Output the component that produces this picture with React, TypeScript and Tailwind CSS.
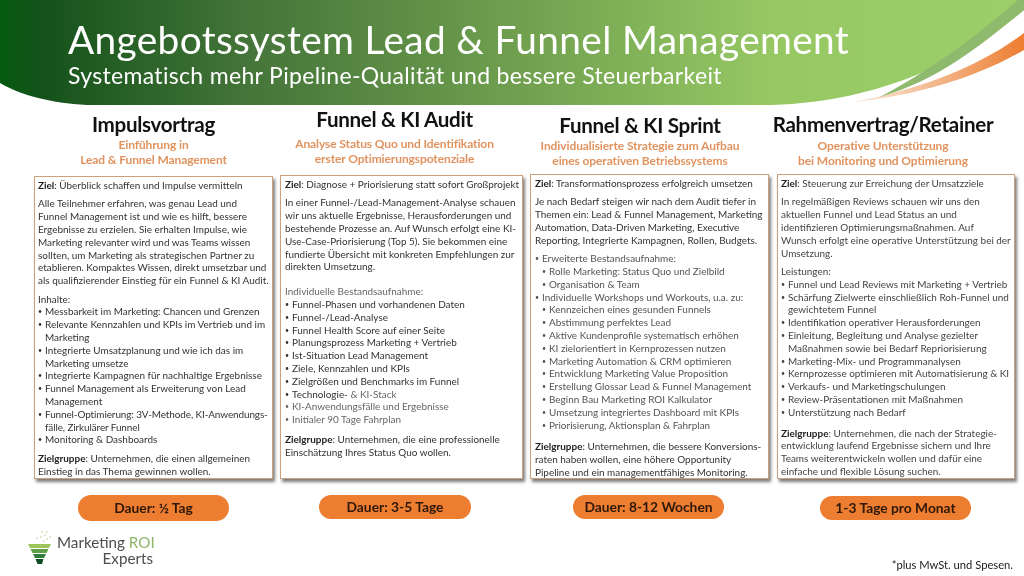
import React from "react";

const Bold = ({ children }: { children: React.ReactNode }) => <b className="font-bold text-[#222]">{children}</b>;

const Li = ({ children, sub, className }: { children: React.ReactNode; sub?: boolean; className?: string }) => (
  <div className={(sub ? "flex pl-[7px] " : "flex ") + (className ?? "")}>
    <span className="w-[7px] shrink-0 text-[7px]">•</span>
    <span>{children}</span>
  </div>
);

const Card = ({ className, children }: { className: string; children: React.ReactNode }) => (
  <div className={"whitespace-nowrap border border-[#c9a27c] bg-white pt-[2px] text-[9.95px] leading-[12.8px] shadow-[2px_3px_3px_rgba(80,80,80,0.75)] [&>p]:mb-[5.6px] " + className}>
    {children}
  </div>
);

const Head = ({ title, l1, l2, className, subClass }: { title: string; l1: string; l2: string; className: string; subClass: string }) => (
  <div className={"whitespace-nowrap text-center " + className}>
    <div className="text-[20.6px] leading-[24px] font-bold tracking-[-0.3px] text-[#111]">{title}</div>
    <div className={"text-[12px] leading-[15px] font-bold tracking-[-0.1px] text-[#e0935f] " + subClass}>{l1}</div>
    <div className="text-[12px] leading-[15px] font-bold tracking-[-0.1px] text-[#e0935f]">{l2}</div>
  </div>
);

const Pill = ({ children, className }: { children: React.ReactNode; className: string }) => (
  <div className={"flex items-center justify-center rounded-full bg-[#ed7d31] text-[13.8px] font-bold text-[#2e1808] " + className}>
    {children}
  </div>
);

export default function App() {
  return (
    <div className="relative h-[576px] w-[1024px] overflow-hidden bg-white blur-[0.3px]" style={{ fontFamily: "Lato, 'Open Sans', sans-serif" }}>
      <header className="relative h-[106px] pl-[68px] pt-[17px] text-white">
        <svg className="absolute left-0 top-0" width="1024" height="110" viewBox="0 0 1024 110">
          <defs>
            <linearGradient id="g" x1="0" x2="1" y1="0" y2="0">
              <stop offset="0" stopColor="#045a10" />
              <stop offset="0.04" stopColor="#14521a" />
              <stop offset="0.25" stopColor="#46763a" />
              <stop offset="0.5" stopColor="#6f9f4e" />
              <stop offset="0.75" stopColor="#96c763" />
              <stop offset="1" stopColor="#9ccf69" />
            </linearGradient>
            <linearGradient id="o" x1="0" x2="1" y1="0" y2="0">
              <stop offset="0" stopColor="#fdf0e6" />
              <stop offset="0.45" stopColor="#f3bd95" />
              <stop offset="1" stopColor="#ed7d31" />
            </linearGradient>
          </defs>
          <path d="M847 103 C910 92 975 70 1024 33 V50 C975 78 920 95 847 103Z" fill="url(#o)" />
          <path d="M0 0 H1024 V10 C965 60 875 105 760 105 H87 C50 103 20 95 0 83 Z" fill="url(#g)" />
          <path d="M1018 0 C985 28 945 62 880 97 C940 80 985 42 1024 10 V0Z" fill="#8fb96c" />
        </svg>
        <h1 className="relative whitespace-nowrap text-[38.8px] leading-[44px] tracking-[0.35px]">Angebotssystem Lead &amp; Funnel Management</h1>
        <div className="relative mt-[1px] whitespace-nowrap text-[23px] leading-[27px] tracking-[0.33px]">Systematisch mehr Pipeline-Qualität und bessere Steuerbarkeit</div>
      </header>

      <main className="flex pl-[34px]">
        <section className="w-[239px]">
          <Head className="mt-[6px]" subClass="mt-[1px]" title="Impulsvortrag" l1="Einführung in" l2="Lead & Funnel Management" />
          <Card className="mt-[9px] h-[303px] pl-[3px] text-[#333]">
            <p><Bold>Ziel</Bold>: Überblick schaffen und Impulse vermitteln</p>
            <p>Alle Teilnehmer erfahren, was genau Lead und<br />Funnel Management ist und wie es hilft, bessere<br />Ergebnisse zu erzielen. Sie erhalten Impulse, wie<br />Marketing relevanter wird und was Teams wissen<br />sollten, um Marketing als strategischen Partner zu<br />etablieren. Kompaktes Wissen, direkt umsetzbar und<br />als qualifizierender Einstieg für ein Funnel &amp; KI Audit.</p>
            <div>Inhalte:</div>
            <Li>Messbarkeit im Marketing: Chancen und Grenzen</Li>
            <Li>Relevante Kennzahlen und KPIs im Vertrieb und im<br />Marketing</Li>
            <Li>Integrierte Umsatzplanung und wie ich das im<br />Marketing umsetze</Li>
            <Li>Integrierte Kampagnen für nachhaltige Ergebnisse</Li>
            <Li>Funnel Management als Erweiterung von Lead<br />Management</Li>
            <Li className="tracking-[-0.1px]">Funnel-Optimierung: 3V-Methode, KI-Anwendungs-<br />fälle, Zirkulärer Funnel</Li>
            <Li>Monitoring &amp; Dashboards</Li>
            <p className="mt-[5.6px]"><Bold>Zielgruppe</Bold>: Unternehmen, die einen allgemeinen<br />Einstieg in das Thema gewinnen wollen.</p>
          </Card>
          <Pill className="ml-[44px] mt-[16px] h-[26px] w-[151px]">Dauer: ½ Tag</Pill>
        </section>

        <section className="ml-[7px] w-[243px]">
          <Head className="-ml-[14px] mt-[1px]" subClass="mt-[5px]" title="Funnel & KI Audit" l1="Analyse Status Quo und Identifikation" l2="erster Optimierungspotenziale" />
          <Card className="mt-[9px] h-[304px] pl-[4px] text-[#333]">
            <p><Bold>Ziel</Bold>: Diagnose + Priorisierung statt sofort Großprojekt</p>
            <p className="!mb-[12px]">In einer Funnel-/Lead-Management-Analyse schauen<br />wir uns aktuelle Ergebnisse, Herausforderungen und<br />bestehende Prozesse an. Auf Wunsch erfolgt eine KI-<br />Use-Case-Priorisierung (Top 5). Sie bekommen eine<br />fundierte Übersicht mit konkreten Empfehlungen zur<br />direkten Umsetzung.</p>
            <div className="text-[#666]">Individuelle Bestandsaufnahme:</div>
            <Li>Funnel-Phasen und vorhandenen Daten</Li>
            <Li>Funnel-/Lead-Analyse</Li>
            <Li>Funnel Health Score auf einer Seite</Li>
            <Li>Planungsprozess Marketing + Vertrieb</Li>
            <Li>Ist-Situation Lead Management</Li>
            <Li>Ziele, Kennzahlen und KPIs</Li>
            <Li>Zielgrößen und Benchmarks im Funnel</Li>
            <Li>Technologie- <span className="text-[#666]">&amp; KI-Stack</span></Li>
            <Li className="text-[#666]">KI-Anwendungsfälle und Ergebnisse</Li>
            <Li className="text-[#666]">Initialer 90 Tage Fahrplan</Li>
            <p className="mt-[7px]"><Bold>Zielgruppe</Bold>: Unternehmen, die eine professionelle<br />Einschätzung Ihres Status Quo wollen.</p>
          </Card>
          <Pill className="ml-[39px] mt-[16px] h-[24px] w-[152px]">Dauer: 3-5 Tage</Pill>
        </section>

        <section className="ml-[7px] w-[239px]">
          <Head className="-ml-[19px] mt-[7px]" subClass="mt-[1px]" title="Funnel & KI Sprint" l1="Individualisierte Strategie zum Aufbau" l2="eines operativen Betriebssystems" />
          <Card className="mt-[6px] h-[305px] pl-[4px] text-[#555]">
            <p className="text-[#333]"><Bold>Ziel</Bold>: Transformationsprozess erfolgreich umsetzen</p>
            <p className="text-[#333]">Je nach Bedarf steigen wir nach dem Audit tiefer in<br />Themen ein: Lead &amp; Funnel Management, Marketing<br />Automation, Data-Driven Marketing, Executive<br />Reporting, Integrierte Kampagnen, Rollen, Budgets.</p>
            <Li>Erweiterte Bestandsaufnahme:</Li>
            <Li sub>Rolle Marketing: Status Quo und Zielbild</Li>
            <Li sub>Organisation &amp; Team</Li>
            <Li>Individuelle Workshops und Workouts, u.a. zu:</Li>
            <Li sub>Kennzeichen eines gesunden Funnels</Li>
            <Li sub>Abstimmung perfektes Lead</Li>
            <Li sub>Aktive Kundenprofile systematisch erhöhen</Li>
            <Li sub>KI zielorientiert in Kernprozessen nutzen</Li>
            <Li sub>Marketing Automation &amp; CRM optimieren</Li>
            <Li sub>Entwicklung Marketing Value Proposition</Li>
            <Li sub>Erstellung Glossar Lead &amp; Funnel Management</Li>
            <Li sub>Beginn Bau Marketing ROI Kalkulator</Li>
            <Li sub>Umsetzung integriertes Dashboard mit KPIs</Li>
            <Li sub>Priorisierung, Aktionsplan &amp; Fahrplan</Li>
            <p className="mt-[9px] text-[#333]"><Bold>Zielgruppe</Bold>: Unternehmen, die bessere Konversions-<br />raten haben wollen, eine höhere Opportunity<br />Pipeline und ein managementfähiges Monitoring.</p>
          </Card>
          <Pill className="ml-[43px] mt-[16px] h-[24px] w-[151px]">Dauer: 8-12 Wochen</Pill>
        </section>

        <section className="ml-[8px] w-[238px]">
          <Head className="-ml-[26px] mt-[6px]" subClass="mt-[2px]" title="Rahmenvertrag/Retainer" l1="Operative Unterstützung" l2="bei Monitoring und Optimierung" />
          <Card className="mt-[6px] h-[305px] pl-[3px] text-[#444]">
            <p><Bold>Ziel</Bold>: Steuerung zur Erreichung der Umsatzziele</p>
            <p>In regelmäßigen Reviews schauen wir uns den<br />aktuellen Funnel und Lead Status an und<br />identifizieren Optimierungsmaßnahmen. Auf<br />Wunsch erfolgt eine operative Unterstützung bei der<br />Umsetzung.</p>
            <div>Leistungen:</div>
            <Li>Funnel und Lead Reviews mit Marketing + Vertrieb</Li>
            <Li>Schärfung Zielwerte einschließlich Roh-Funnel und<br />gewichtetem Funnel</Li>
            <Li>Identifikation operativer Herausforderungen</Li>
            <Li>Einleitung, Begleitung und Analyse gezielter<br />Maßnahmen sowie bei Bedarf Repriorisierung</Li>
            <Li>Marketing-Mix- und Programmanalysen</Li>
            <Li>Kernprozesse optimieren mit Automatisierung &amp; KI</Li>
            <Li>Verkaufs- und Marketingschulungen</Li>
            <Li>Review-Präsentationen mit Maßnahmen</Li>
            <Li>Unterstützung nach Bedarf</Li>
            <p className="mt-[8px]"><Bold>Zielgruppe</Bold>: Unternehmen, die nach der Strategie-<br />entwicklung laufend Ergebnisse sichern und Ihre<br />Teams weiterentwickeln wollen und dafür eine<br />einfache und flexible Lösung suchen.</p>
          </Card>
          <Pill className="ml-[43px] mt-[17px] h-[24px] w-[151px]">1-3 Tage pro Monat</Pill>
        </section>
      </main>

      <div className="absolute left-[27px] top-[530px] flex">
        <svg width="28" height="36" viewBox="0 0 28 36">
          <g fill="#b8cf8c">
            <circle cx="15" cy="2" r="0.8" /><circle cx="20" cy="2" r="0.8" /><circle cx="18" cy="5" r="0.8" /><circle cx="23" cy="7" r="0.8" /><circle cx="14" cy="7" r="0.8" /><circle cx="20" cy="9" r="0.8" /><circle cx="10" cy="8" r="0.8" /><circle cx="17" cy="11" r="0.8" />
          </g>
          <path d="M1 14 H24 L22 18 H3 Z" fill="#9dc55a" />
          <path d="M3.5 19 H21.5 L19.5 23 H5.5 Z" fill="#5fa146" />
          <path d="M6 24 H19 L17 28 H8 Z" fill="#2f7d3a" />
          <path d="M8.5 29 H16.5 L15 34 H10.5 Z" fill="#0f4d20" />
        </svg>
        <div className="ml-[2px] mt-[4px] w-[96px] text-right text-[15.2px] leading-[16px] text-[#4d4d4d]">
          <div className="whitespace-nowrap">Marketing <span className="text-[#8fb56a]">ROI</span></div>
          <div>Experts</div>
        </div>
      </div>
      <div className="absolute right-[11px] top-[558px] text-[11.2px] leading-[14px] text-[#222]">*plus MwSt. und Spesen.</div>
    </div>
  );
}
